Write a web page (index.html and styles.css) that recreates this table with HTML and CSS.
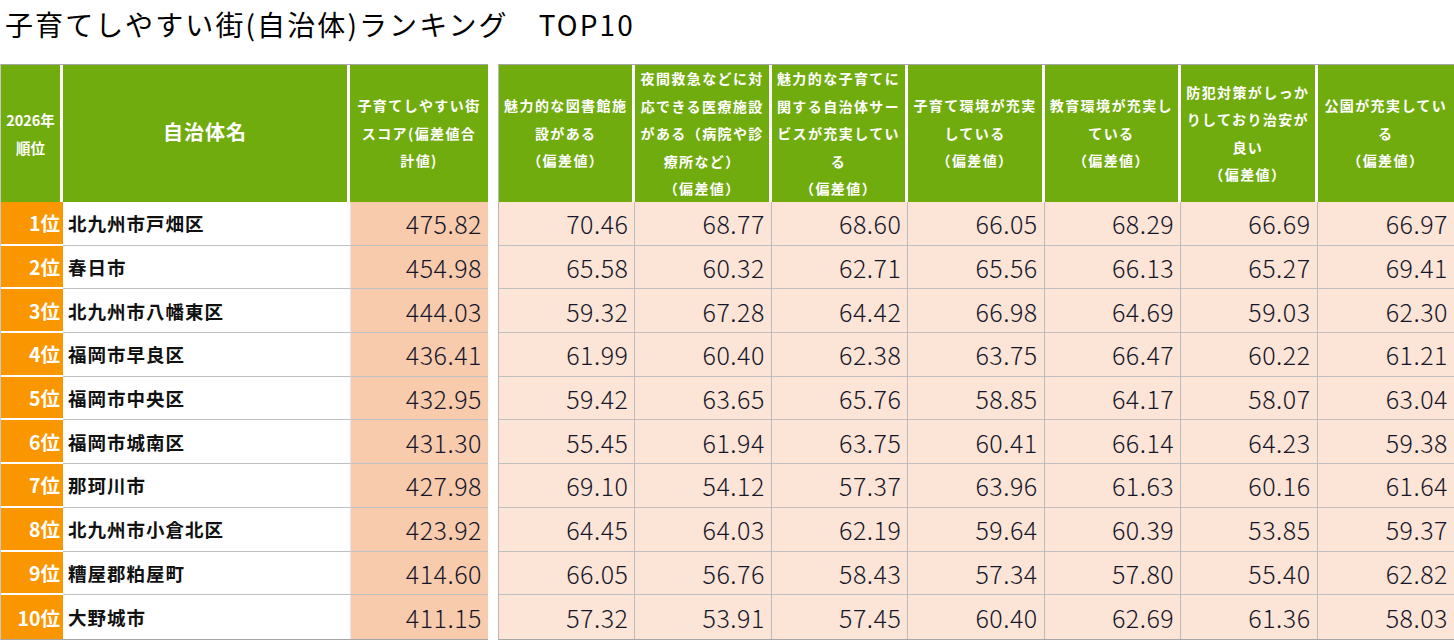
FILE: index.html
```html
<!DOCTYPE html>
<html lang="ja">
<head>
<meta charset="utf-8">
<title>子育てしやすい街（自治体）ランキング TOP10</title>
<link rel="stylesheet" href="styles.css">
</head>
<body>
<h1 class="title">子育てしやすい街(自治体)ランキング　TOP10</h1>
<div class="tables">
  <div class="tbl left">
    <div class="hd hd-rank"><span>2026年<br>順位</span></div>
    <div class="hd hd-name"><span>自治体名</span></div>
    <div class="hd hd-last"><span>子育てしやすい街<br>スコア(偏差値合<br>計値)</span></div>

    <div class="rank">1位</div><div class="name">北九州市戸畑区</div><div class="score">475.82</div>
    <div class="rank">2位</div><div class="name">春日市</div><div class="score">454.98</div>
    <div class="rank">3位</div><div class="name">北九州市八幡東区</div><div class="score">444.03</div>
    <div class="rank">4位</div><div class="name">福岡市早良区</div><div class="score">436.41</div>
    <div class="rank">5位</div><div class="name">福岡市中央区</div><div class="score">432.95</div>
    <div class="rank">6位</div><div class="name">福岡市城南区</div><div class="score">431.30</div>
    <div class="rank">7位</div><div class="name">那珂川市</div><div class="score">427.98</div>
    <div class="rank">8位</div><div class="name">北九州市小倉北区</div><div class="score">423.92</div>
    <div class="rank">9位</div><div class="name">糟屋郡粕屋町</div><div class="score">414.60</div>
    <div class="rank">10位</div><div class="name">大野城市</div><div class="score">411.15</div>
  </div>
  <div class="tbl right">
    <div class="hd"><span>魅力的な図書館施<br>設がある<br>（偏差値）</span></div>
    <div class="hd"><span>夜間救急などに対<br>応できる医療施設<br>がある（病院や診<br>療所など）<br>（偏差値）</span></div>
    <div class="hd"><span>魅力的な子育てに<br>関する自治体サー<br>ビスが充実してい<br>る<br>（偏差値）</span></div>
    <div class="hd"><span>子育て環境が充実<br>している<br>（偏差値）</span></div>
    <div class="hd"><span>教育環境が充実し<br>ている<br>（偏差値）</span></div>
    <div class="hd"><span>防犯対策がしっか<br>りしており治安が<br>良い<br>（偏差値）</span></div>
    <div class="hd hd-last"><span>公園が充実してい<br>る<br>（偏差値）</span></div>

    <div class="val">70.46</div><div class="val">68.77</div><div class="val">68.60</div><div class="val">66.05</div><div class="val">68.29</div><div class="val">66.69</div><div class="val">66.97</div>
    <div class="val">65.58</div><div class="val">60.32</div><div class="val">62.71</div><div class="val">65.56</div><div class="val">66.13</div><div class="val">65.27</div><div class="val">69.41</div>
    <div class="val">59.32</div><div class="val">67.28</div><div class="val">64.42</div><div class="val">66.98</div><div class="val">64.69</div><div class="val">59.03</div><div class="val">62.30</div>
    <div class="val">61.99</div><div class="val">60.40</div><div class="val">62.38</div><div class="val">63.75</div><div class="val">66.47</div><div class="val">60.22</div><div class="val">61.21</div>
    <div class="val">59.42</div><div class="val">63.65</div><div class="val">65.76</div><div class="val">58.85</div><div class="val">64.17</div><div class="val">58.07</div><div class="val">63.04</div>
    <div class="val">55.45</div><div class="val">61.94</div><div class="val">63.75</div><div class="val">60.41</div><div class="val">66.14</div><div class="val">64.23</div><div class="val">59.38</div>
    <div class="val">69.10</div><div class="val">54.12</div><div class="val">57.37</div><div class="val">63.96</div><div class="val">61.63</div><div class="val">60.16</div><div class="val">61.64</div>
    <div class="val">64.45</div><div class="val">64.03</div><div class="val">62.19</div><div class="val">59.64</div><div class="val">60.39</div><div class="val">53.85</div><div class="val">59.37</div>
    <div class="val">66.05</div><div class="val">56.76</div><div class="val">58.43</div><div class="val">57.34</div><div class="val">57.80</div><div class="val">55.40</div><div class="val">62.82</div>
    <div class="val">57.32</div><div class="val">53.91</div><div class="val">57.45</div><div class="val">60.40</div><div class="val">62.69</div><div class="val">61.36</div><div class="val">58.03</div>
  </div>
</div>
</body>
</html>
```

FILE: styles.css
```css
* { box-sizing: border-box; }

html, body {
  margin: 0;
  padding: 0;
  background: #ffffff;
  font-family: "Noto Sans CJK JP", "Noto Sans", sans-serif;
  color: #111111;
  width: 1454px;
  overflow: hidden;
}

.title {
  margin: 0;
  height: 64px;
  padding-left: 5px;
  font-size: 28px;
  font-weight: 400;
  line-height: 48px;
  letter-spacing: 2.1px;
  color: #000000;
  white-space: nowrap;
}

.tables {
  display: flex;
  gap: 10px;
  align-items: flex-start;
}

.tbl {
  display: grid;
  border-top: 1px solid #a6a6a6;
  border-bottom: 1px solid #a6a6a6;
}

.left {
  width: 488px;
  grid-template-columns: 62px 287px 138px;
  grid-template-rows: 137px repeat(10, 43.7px);
  border-left: 1px solid #c8c8c8;
  border-right: 1px solid #a6a6a6;
}

.right {
  width: 956px;
  grid-template-columns: repeat(7, 1fr);
  grid-template-rows: 137px repeat(10, 43.7px);
  border-left: 1px solid #b8b8b8;
}

.hd {
  background: #71ac0f;
  color: #ffffff;
  font-weight: 700;
  font-size: 14px;
  line-height: 27.5px;
  letter-spacing: 1.4px;
  text-align: center;
  display: grid;
  place-items: center;
  border-right: 3px solid #ffffff;
  white-space: nowrap;
  overflow: hidden;
}

.hd-last { border-right: none; }

.hd-rank {
  font-size: 14.5px;
  letter-spacing: 0;
  line-height: 28px;
}

.hd-name {
  font-size: 20px;
  letter-spacing: 1px;
  padding-bottom: 3px;
}

.rank {
  background: #fa9600;
  color: #ffffff;
  font-weight: 700;
  font-size: 19.5px;
  text-align: right;
  padding-right: 3px;
  display: flex;
  align-items: center;
  justify-content: flex-end;
  border-bottom: 2px solid #ffffff;
}

.rank:nth-last-child(3) { border-bottom: none; }

.name {
  background: #ffffff;
  font-weight: 700;
  font-size: 18.5px;
  letter-spacing: 1px;
  padding-left: 5px;
  display: flex;
  align-items: center;
  border-bottom: 1px solid #bfbfbf;
  color: #111111;
}

.score, .val {
  font-weight: 300;
  font-size: 25px;
  letter-spacing: 0.5px;
  text-align: right;
  padding-right: 6px;
  display: flex;
  align-items: center;
  justify-content: flex-end;
  border-bottom: 1px solid #bfbfbf;
  color: #16162a;
}

.score {
  background: #f8cbad;
  border-left: 1px solid #e6e6e6;
}

.val {
  background: #fce4d6;
  border-right: 1px solid #bcbcbc;
}

.val:nth-child(7n) { border-right: none; }

.name:nth-last-child(2), .score:last-child { border-bottom: none; }
.val:nth-last-child(-n+7) { border-bottom: none; }
```
